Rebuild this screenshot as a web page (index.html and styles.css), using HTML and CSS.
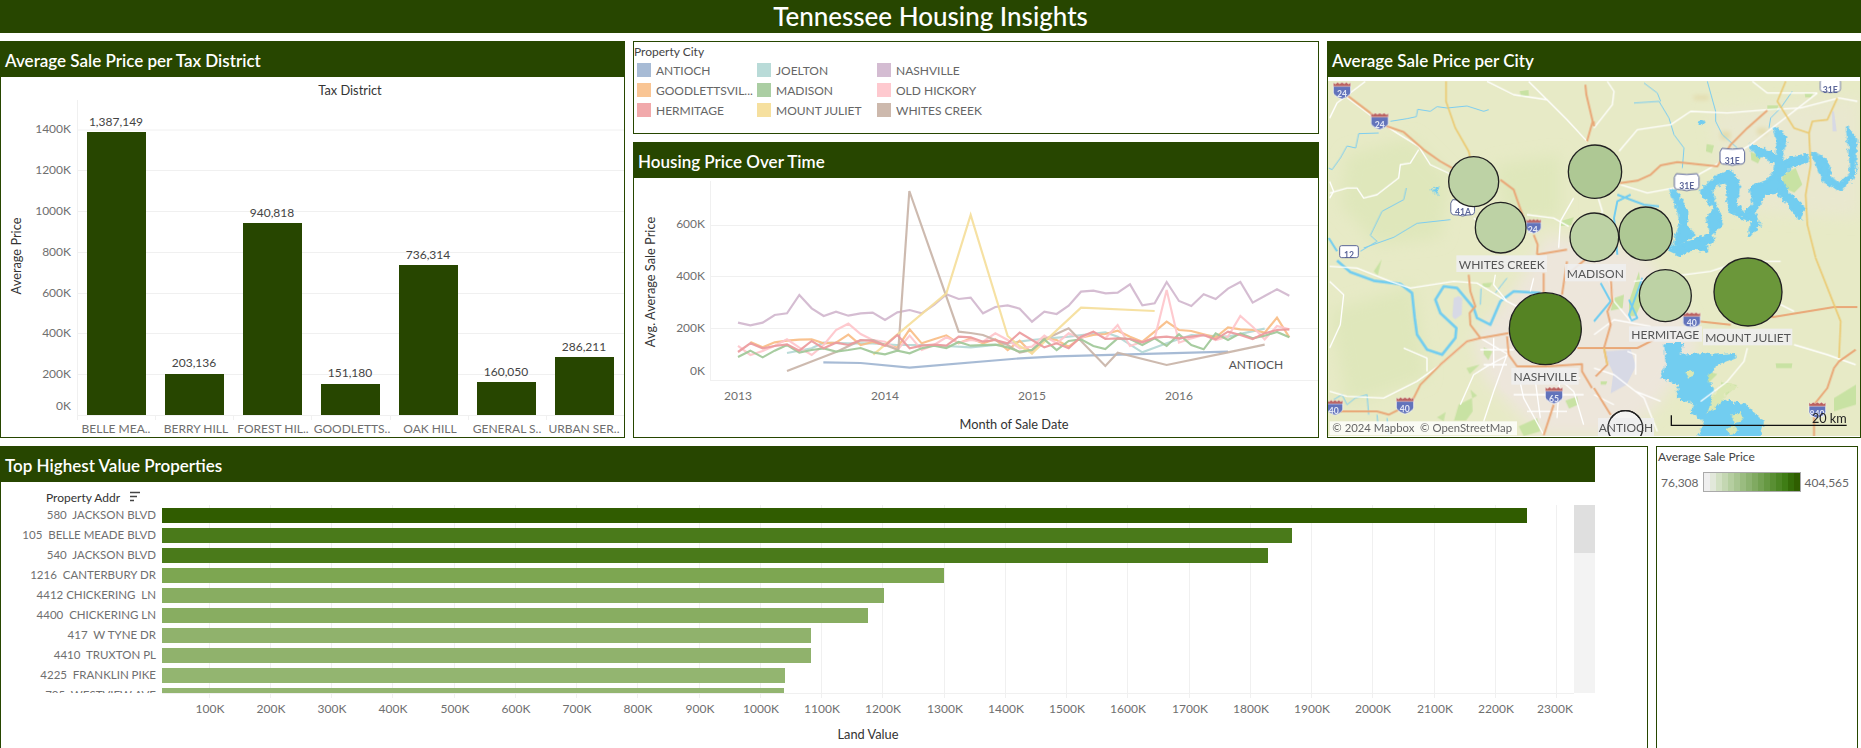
FILE: index.html
```html
<!DOCTYPE html>
<html lang="en">
<head>
<meta charset="utf-8">
<title>Tennessee Housing Insights</title>
<link rel="stylesheet" href="styles.css">
</head>
<body>
<header class="title-bar">Tennessee Housing Insights</header>
<main class="dash">
  <div class="top-row">
    <section class="panel">
      <h2 class="panel-head">Average Sale Price per Tax District</h2>
      <svg class="chart" width="623" height="360" viewBox="1 77 623 360">
        <text class="axis-title" x="350" y="90">Tax District</text>
        <g class="grid">
          <line x1="77" x2="624" y1="130" y2="130"/><line x1="77" x2="624" y1="170.5" y2="170.5"/><line x1="77" x2="624" y1="211.5" y2="211.5"/><line x1="77" x2="624" y1="252.5" y2="252.5"/><line x1="77" x2="624" y1="293.5" y2="293.5"/><line x1="77" x2="624" y1="333.5" y2="333.5"/><line x1="77" x2="624" y1="374.5" y2="374.5"/><line x1="77" x2="624" y1="415.5" y2="415.5"/>
          <line x1="77.5" x2="77.5" y1="100" y2="420"/><line x1="155.5" x2="155.5" y1="415" y2="420"/><line x1="233.5" x2="233.5" y1="415" y2="420"/><line x1="311.5" x2="311.5" y1="415" y2="420"/><line x1="390.5" x2="390.5" y1="415" y2="420"/><line x1="468.5" x2="468.5" y1="415" y2="420"/><line x1="546.5" x2="546.5" y1="415" y2="420"/>
        </g>
        <g class="bar-dark">
          <rect x="87" y="132" width="59" height="283"/><rect x="165" y="374" width="59" height="41"/><rect x="243" y="223" width="59" height="192"/><rect x="321" y="384" width="59" height="31"/><rect x="399" y="265" width="59" height="150"/><rect x="477" y="382" width="59" height="33"/><rect x="555" y="357" width="59" height="58"/>
        </g>
        <g class="tick tick-end">
          <text x="71" y="129">1400K</text><text x="71" y="170">1200K</text><text x="71" y="211">1000K</text><text x="71" y="252">800K</text><text x="71" y="293">600K</text><text x="71" y="333">400K</text><text x="71" y="374">200K</text><text x="71" y="406">0K</text>
        </g>
        <g class="value">
          <text x="116" y="122">1,387,149</text><text x="194" y="363">203,136</text><text x="272" y="213">940,818</text><text x="350" y="373">151,180</text><text x="428" y="255">736,314</text><text x="506" y="372">160,050</text><text x="584" y="347">286,211</text>
        </g>
        <g class="tick tick-mid">
          <text x="116" y="429">BELLE MEA..</text><text x="196" y="429">BERRY HILL</text><text x="273" y="429">FOREST HIL..</text><text x="352" y="429">GOODLETTS..</text><text x="430" y="429">OAK HILL</text><text x="507" y="429">GENERAL S..</text><text x="584" y="429">URBAN SER..</text>
        </g>
        <text class="axis-title" transform="translate(16 256) rotate(-90)">Average Price</text>
      </svg>
    </section>

    <div class="mid-col">
      <section class="panel legend-panel">
        <div class="legend-title">Property City</div>
        <ul class="city-legend">
          <li><i class="sw c-antioch"></i>ANTIOCH</li>
          <li><i class="sw c-joelton"></i>JOELTON</li>
          <li><i class="sw c-nashville"></i>NASHVILLE</li>
          <li><i class="sw c-goodlett"></i>GOODLETTSVIL...</li>
          <li><i class="sw c-madison"></i>MADISON</li>
          <li><i class="sw c-oldhickory"></i>OLD HICKORY</li>
          <li><i class="sw c-hermitage"></i>HERMITAGE</li>
          <li><i class="sw c-juliet"></i>MOUNT JULIET</li>
          <li><i class="sw c-whites"></i>WHITES CREEK</li>
        </ul>
      </section>
      <section class="panel line-panel">
        <h2 class="panel-head">Housing Price Over Time</h2>
        <svg class="chart" width="684" height="259" viewBox="634 178 684 259">
          <g class="grid">
            <line x1="710" x2="1318" y1="225.5" y2="225.5"/><line x1="710" x2="1318" y1="276.5" y2="276.5"/><line x1="710" x2="1318" y1="328.5" y2="328.5"/><line x1="710" x2="1318" y1="380.5" y2="380.5"/><line x1="710.5" x2="710.5" y1="181" y2="381"/>
          </g>
          <g class="tick tick-end">
            <text x="705" y="224">600K</text><text x="705" y="276">400K</text><text x="705" y="328">200K</text><text x="705" y="371">0K</text>
          </g>
          <g class="tick tick-mid">
            <text x="738" y="396">2013</text><text x="885" y="396">2014</text><text x="1032" y="396">2015</text><text x="1179" y="396">2016</text>
          </g>
          <g class="series" transform="translate(730 180) scale(.33333)">
            <polyline class="l-antioch" points="280,547 392,549 539,563 870,535 980,529 1494,515"/>
            <polyline class="l-joelton" points="171,519 245,505 281,488 355,490 428,490 500,495 575,495 649,498 722,502 796,495 869,485 905,480 1016,470 1126,457 1163,470 1237,517 1310,490 1384,465 1494,470 1604,446"/>
            <polyline class="l-goodlett" points="61,486 98,502 134,487 171,482 208,479 245,478 281,490 318,488 355,464 392,495 428,486 465,495 502,503 539,448 575,490 612,478 649,466 686,490 722,475 759,490 796,478 833,510 869,482 906,520 943,475 980,480 1016,500 1053,473 1090,465 1126,462 1163,452 1200,470 1237,485 1274,455 1310,425 1347,450 1384,453 1421,463 1457,472 1494,442 1531,448 1568,450 1604,458 1641,413 1678,472"/>
            <polyline class="l-oldhickory" points="24,498 61,525 98,513 134,497 171,478 208,503 245,525 281,495 318,450 355,431 392,462 428,480 465,485 502,510 539,467 575,510 612,495 649,472 686,488 722,480 759,485 796,460 833,480 869,505 906,500 943,467 980,490 1016,460 1053,475 1090,455 1126,475 1163,435 1200,498 1237,485 1274,475 1310,330 1347,488 1384,475 1421,465 1457,480 1494,470 1531,408 1568,440 1604,478 1641,438 1678,448"/>
            <polyline class="l-nashville" points="24,428 61,436 98,428 134,405 171,400 208,345 245,385 281,408 318,395 355,407 392,400 428,398 465,420 502,397 539,390 575,400 612,375 649,343 686,357 722,353 759,400 796,381 833,376 869,386 906,425 943,395 980,402 1016,377 1053,335 1090,332 1127,340 1163,338 1200,313 1237,376 1274,370 1310,306 1347,363 1384,378 1421,343 1457,357 1494,326 1531,306 1568,368 1604,348 1641,328 1678,347"/>
            <polyline class="l-whites" points="171,573 320,515 390,482 430,480 465,495 505,510 538,33 686,455 722,459 759,465 833,495 869,518 906,510 940,480 1016,445 1126,558 1163,518 1310,555 1494,517 1604,494"/>
            <polyline class="l-juliet" points="430,524 649,340 722,105 833,468 869,498 906,520 1053,383 1274,393"/>
            <polyline class="l-madison" points="24,531 61,512 98,532 134,512 171,495 208,518 245,510 281,505 318,515 355,510 392,504 428,517 465,523 502,512 539,520 575,505 612,497 649,504 686,486 722,497 796,494 833,502 869,515 906,510 943,478 980,510 1016,483 1053,478 1090,498 1126,507 1163,475 1200,477 1237,495 1274,475 1310,498 1347,463 1384,495 1421,508 1457,460 1494,480 1531,460 1568,475 1604,467 1641,456 1678,472"/>
            <polyline class="l-hermitage" points="24,516 61,490 98,505 134,498 171,493 208,512 245,483 281,505 318,488 355,495 392,480 428,483 465,497 502,465 539,505 575,497 612,494 649,497 686,470 722,472 759,485 796,480 833,490 869,458 906,480 943,502 980,490 1016,505 1053,470 1090,455 1126,477 1163,475 1200,477 1237,487 1274,473 1310,470 1347,475 1384,470 1421,465 1457,478 1494,455 1531,465 1568,477 1604,460 1641,450 1678,448"/>
          </g>
          <text class="tick tick-mid mark-label" x="1256" y="364">ANTIOCH</text>
          <text class="axis-title" x="1014" y="424">Month of Sale Date</text>
          <text class="axis-title" transform="translate(650 282) rotate(-90)">Avg. Average Sale Price</text>
        </svg>
      </section>
    </div>

    <section class="panel">
      <h2 class="panel-head map-head">Average Sale Price per City</h2>
      <svg class="map" width="532" height="355" viewBox="3 9 1596 1065">
        <defs>
          <filter id="soft" x="-10%" y="-10%" width="120%" height="120%"><feGaussianBlur stdDeviation="22"/></filter>
          <filter id="soft2" x="-20%" y="-20%" width="140%" height="140%"><feGaussianBlur stdDeviation="6"/></filter>
          <filter id="tiny" x="-2%" y="-2%" width="104%" height="104%"><feGaussianBlur stdDeviation="1.2"/></filter>
          <filter id="jag" x="-5%" y="-5%" width="110%" height="110%"><feTurbulence type="fractalNoise" baseFrequency=".08" numOctaves="3" seed="4" result="n"/><feDisplacementMap in="SourceGraphic" in2="n" scale="18" xChannelSelector="R" yChannelSelector="G"/></filter>
          <symbol id="ishield" viewBox="0 0 54 54" overflow="visible">
            <path class="sh-blue" d="M1 14H53V32C53 42 40 48 27 53C14 48 1 42 1 32Z"/>
            <path class="sh-red" d="M1 4L7 8L14 3L20 7L27 3L34 7L40 3L47 8L53 4V15H1Z"/>
          </symbol>
          <symbol id="ushield" viewBox="0 0 78 56" overflow="visible">
            <path class="sh-us" d="M8 3Q39 8 70 3L76 14V40Q76 48 68 50Q52 50 39 54Q26 50 10 50Q2 48 2 40V14Z"/>
          </symbol>
        </defs>
        <rect class="land" x="0" y="0" width="1602" height="1080"/>
        <g class="soft">
          <path class="forest" d="M60 230L250 180L370 300L340 480L150 500L40 380Z"/>
          <path class="forest" d="M500 260L700 230L700 420L540 430Z"/>
          <path class="forest" d="M10 700L260 620L300 900L60 980Z"/>
          <path class="warm" d="M1150 100L1600 60L1600 420L1200 400Z"/>
          <path class="urban" d="M660 470L940 520L1040 640L1120 800L980 1000L860 1074L640 1074L470 900L440 780L560 640Z"/>
        </g>
        <g class="soft2">
          <path class="urban" d="M640 620L760 600L800 700L640 720Z"/>
          <path class="urban" d="M500 780L640 800L760 950L640 1020L520 930Z"/>
          <path class="tan" d="M1100 52h45v14h-45z"/><path class="tan" d="M1180 160h30v25h-30z"/><path class="tan" d="M1290 150h30v20h-30z"/>
        </g>
        <g class="blur">
        <g class="park">
          <path d="M578 40l26-4l2 18l-24 2z"/><path d="M705 428l35-10l-8 24l-32 2z"/>
          <g transform="translate(801 0)"><path d="M338 198l22 4l-6 24l-18-6z"/><path d="M470 222l34 10l-12 24l-20-10z"/><path d="M565 290l40-20l20 50l-24 24l-36-16z"/><path d="M520 82l34 0l-6 14l-28 0z"/><path d="M632 46l26 0l-8 12l-16 0z"/></g>
          <g transform="translate(0 540)"><path d="M140 40l24-36l-12 48z"/><path d="M466 76l30-2l-8 14l-22 0z"/><path d="M470 268l26 12l-12 26l-14-18z"/><path d="M418 330l40-10l-30 28z"/><path d="M430 395l20 18l-14 8z"/><path d="M395 440l40-20l2 40l-20 28l-36 0z"/><path d="M330 478l26-16l-6 28z"/><path d="M575 505l55-25l10 40l-50 14z"/><path d="M715 428l35-12l4 24l-28 12z"/></g>
          <g transform="translate(801 540)"><path d="M60 120l30-10l-4 40l-36 8z"/><path d="M105 130l30-90l10 90l-20 44l-20 0z"/><path d="M545 316h50l-2 14l-46 0z"/><path d="M720 420l66-40v60l-66 20z"/><path d="M20 370h20l-4 10l-16 0z"/><path d="M380 372l50 10l-34 30z"/><path d="M340 340l30 8l-30 30z"/></g>
        </g>
        <g class="airport">
          <path d="M380 660l14-6l12 6l-2 50l-20 14l-8-8z"/>
          <path transform="translate(801 540)" d="M36 280l74-6l16 50l-28 56l-48 26l8-60l-18-40z"/>
          <path transform="translate(801 0)" d="M714 100l6 0l8 60l-12 0z"/>
        </g>
        <g class="creek">
          <path d="M190 130L240 122L268 116L272 94L310 100L330 86L360 90L420 84L470 100L485 95"/>
          <path d="M155 165L95 167L86 210L60 204L40 240L15 275L5 270"/>
          <path d="M100 520L150 490L130 472L165 400L230 365L238 330"/>
          <path d="M110 510L200 478L270 436L370 425"/>
          <g transform="translate(801 0)">
            <path d="M120 75L195 70L225 120L240 170L270 210L265 270"/><path d="M150 15L190 45L200 70"/><path d="M340 10L365 100L365 130L385 170L430 210"/><path d="M595 40L560 90L530 120L525 150"/>
          </g>
          <g transform="translate(0 540)">
            <path d="M20 425L45 410L60 440L85 420L120 410L125 470"/><path d="M150 470L155 520M180 480L185 530"/><path d="M462 92L460 140M540 60L505 105"/>
          </g>
        </g>
        <g class="river">
          <path d="M5 480L30 520"/>
          <path transform="translate(0 540)" class="river-wide" d="M30 8L70 42L140 68L220 78L255 105L263 180L270 230L300 275L345 290L385 240L388 210L340 165L325 125L350 85L390 90L440 150L450 180L490 200L520 130L560 100L640 105"/>
          <path transform="translate(801 540)" d="M20 75L50 130L0 190M105 125L130 180L112 188L105 170L125 115L145 60"/>
          <path transform="translate(801 0)" d="M110 350L70 370L60 420L70 530M70 350L150 380L195 385"/>
        </g>
        </g>
        <g class="jag">
        <g class="lake">
          <path d="M310 335l30-10l-10 14l6 14l-14-8z"/>
          <path transform="translate(801 0)" d="M312 130l16-4l4 10l-16 4z"/>
          <path class="lake-wide" transform="translate(801 0)" d="M228 515L290 492L350 470L340 420L365 392L320 342L370 295L410 280L435 320L425 375L450 410L480 380L468 330L520 310L545 280L552 240L530 225L495 235L470 205L510 215L530 250L548 262L552 200L540 150L575 175L558 255L590 240L640 232L640 248L590 265L555 300L585 350L628 385L618 424L590 385L550 340L510 350L480 400L495 440L465 472L475 430L450 420L410 400L400 350L400 310L375 315L350 340L370 400L382 440L350 470L358 490L330 500L340 520L300 510L260 530Z"/>
          <path class="lake-wide" transform="translate(801 0)" d="M232 338L245 340L275 400L275 445L300 470L258 495L240 500L262 440L255 400Z"/>
          <path class="lake-wide" transform="translate(801 0)" d="M655 222L700 250L710 300L735 320L770 290L770 240L760 150L785 185L780 290L740 335L690 310L670 260Z"/>
          <path transform="translate(801 540)" d="M210 255L270 255L260 290L330 285L355 290L420 285L425 300L370 320L340 360L360 395L350 420L390 425L460 440L510 490L500 540L310 540L330 490L290 465L300 440L250 420L250 380L200 360L215 320Z"/>
        </g>
        <g class="lake-land">
          <path transform="translate(801 540)" d="M385 372L430 385L395 410L375 440L340 465L355 420Z"/>
          <path transform="translate(801 540)" d="M410 470l30-6l6 24l-26 8z"/>
          <path transform="translate(801 540)" d="M275 345l22-8l6 16l-20 6z"/>
          <path transform="translate(801 540)" d="M400 510l26-4l2 18l-24 4z"/>
        </g>
        </g>
        <g class="blur">
        <g class="road-w">
          <path d="M8 120L30 75L115 10"/>
          <path d="M60 58L135 115L210 165L275 205L310 260L375 290"/>
          <path d="M480 10L560 50L660 65L720 125L780 190"/>
          <path d="M605 10L660 65"/>
          <path d="M8 345L60 330L90 330L110 360L150 350L215 300L220 260L250 255L275 215"/>
          <path d="M8 310L20 340L8 360"/>
          <path d="M440 420L470 440"/>
          <path d="M600 410L680 420L725 445M740 360L700 430L695 510"/>
          <g transform="translate(801 0)">
            <path d="M75 220L130 155L230 140L290 100L400 105L520 95L620 90L735 60L790 70"/>
            <path d="M80 320L160 345L240 330L340 275L470 200L670 45"/>
            <path d="M475 10L520 45L630 45L670 45"/>
            <path d="M40 10L60 40L55 80L0 150"/>
            <path d="M8 345L25 400L20 430"/>
          </g>
          <g transform="translate(0 540)">
            <path d="M8 25L90 30L190 70L250 90L380 70L450 75L540 130"/>
            <path d="M8 400L60 415L170 420L270 370L340 320"/>
            <path d="M340 320L420 250L460 240M480 325L440 350L400 440"/>
            <path d="M460 240L545 290L480 325M500 240L500 330M540 290L500 400L470 490"/>
            <path d="M580 150L540 130L500 80L505 50M620 60L610 100"/>
            <path d="M570 330L590 420L650 530M660 330L740 400L770 500M710 130L700 220"/>
            <path d="M8 70L50 110L40 200L8 270"/>
            <path d="M230 270L300 300L300 340"/>
            <path d="M460 275H560M470 320H540M590 360H760M560 410H770M600 460H720M620 330L640 480M700 340L690 480"/>
          </g>
          <g transform="translate(801 540)">
            <path d="M0 230L60 185L170 205M40 40L60 130L110 190"/>
            <path d="M120 70L350 40L440 10L560 10M540 130L600 160"/>
            <path d="M0 330L60 350L150 420L190 520M0 410L60 440M125 400L200 430"/>
            <path d="M100 280L125 290L125 350M320 430L400 370L450 310L460 270"/>
            <path d="M600 260L700 290L785 320"/>
          </g>
        </g>
        <g class="road-o">
          <path d="M25 25L130 105L180 145L230 162L290 215L340 250L375 270"/>
          <path d="M520 305L560 335L572 370L590 420"/>
          <path d="M620 470L632 500L630 530"/>
          <path d="M775 20L778 50L797 130L780 190M800 130L801 145"/>
          <path d="M780 540L720 590M630 530L720 515"/>
          <g transform="translate(801 0)">
            <path d="M78 315L130 308L170 290L200 262L250 252L370 265L410 200L460 150L520 97"/>
          </g>
          <g transform="translate(0 540)">
            <path d="M40 460L150 460L185 470L215 455L260 420L280 380L340 320L420 250L460 240L545 225"/>
            <path d="M425 50L430 100L445 145L428 165L430 200L460 240"/>
            <path d="M650 45L650 110M720 10L705 110"/>
            <path d="M540 235L545 290L570 325L660 325L765 318L765 340L795 390"/>
            <path d="M680 440L650 532"/>
          </g>
          <g transform="translate(801 540)">
            <path d="M533 178L720 147L790 147"/>
            <path d="M-50 270L130 270L180 245"/>
            <path d="M50 60L55 130L40 160L50 200L30 270L40 320L5 355"/>
            <path d="M0 390L50 470"/>
            <path d="M785 275L735 310L720 330L700 390L660 440"/>
            <path d="M660 470L660 540"/>
            <path d="M300 188L410 200"/>
          </g>
        </g>
        <g class="road-y">
          <path d="M357 10L357 70L385 150L425 220L430 240"/>
          <g transform="translate(801 0)">
            <path d="M575 10L550 70L600 150L645 165L650 260L635 350L640 440L665 540"/>
            <path d="M645 165L655 130L700 125L730 60"/>
          </g>
          <g transform="translate(801 540)">
            <path d="M665 0L740 190L735 300"/>
            <path d="M30 270L40 320"/>
          </g>
        </g>
        </g>
        <use href="#ishield" x="18" y="10" width="54" height="54"/>
        <use href="#ishield" x="131" y="102" width="54" height="54"/>
        <use href="#ishield" x="597" y="417" width="46" height="54"/>
        <use href="#ishield" x="780" y="-30" width="30" height="42"/>
        <use href="#ishield" x="207" y="955" width="54" height="54"/>
        <use href="#ishield" x="0" y="962" width="48" height="52"/>
        <use href="#ishield" x="654" y="924" width="54" height="54"/>
        <use href="#ishield" x="1067" y="700" width="54" height="54"/>
        <use href="#ishield" x="1434" y="970" width="74" height="52"/>
        <use href="#ushield" x="1177" y="208" width="78" height="56"/>
        <use href="#ushield" x="1040" y="284" width="78" height="56"/>
        <use href="#ushield" x="1471" y="0" width="78" height="46"/>
        <use href="#ushield" x="368" y="362" width="78" height="54"/>
        <rect class="sh-route" x="38" y="503" width="56" height="36" rx="6"/>
        <g class="sh-i">
          <text x="45" y="47">24</text><text x="158" y="140">24</text><text x="617" y="455">24</text><text x="233" y="990">40</text><text x="20" y="997">40</text><text x="681" y="960">65</text><text x="1094" y="733">40</text><text x="1470" y="1005">840</text>
        </g>
        <g class="sh-u">
          <text x="1216" y="246">31E</text><text x="1079" y="322">31E</text><text x="1510" y="33">31E</text><text x="408" y="400">41A</text><text x="66" y="530">12</text>
        </g>
        <g class="marks">
          <circle class="m-light" cx="440" cy="311" r="75"/>
          <circle class="m-light" cx="521" cy="449" r="76"/>
          <circle class="m-mid" cx="804" cy="281" r="80"/>
          <circle class="m-light" cx="802" cy="478" r="73"/>
          <circle class="m-mid" cx="956" cy="467" r="80"/>
          <circle class="m-light" cx="1015" cy="653" r="78"/>
          <circle class="m-high" cx="1263" cy="642" r="102"/>
          <circle class="m-top" cx="655" cy="752" r="108"/>
          <circle class="m-pale" cx="895" cy="1050" r="52"/>
        </g>
        <g class="map-labels">
          <rect x="388" y="532" width="272" height="50"/><rect x="714" y="558" width="183" height="52"/><rect x="906" y="745" width="219" height="46"/><rect x="1128" y="752" width="268" height="50"/><rect x="553" y="870" width="202" height="50"/><rect x="813" y="1020" width="168" height="55"/>
        </g>
        <circle class="m-ring" cx="895" cy="1050" r="52"/>
        <g class="map-text">
          <text x="524" y="558">WHITES CREEK</text><text x="805" y="585">MADISON</text><text x="1015" y="768">HERMITAGE</text><text x="1263" y="778">MOUNT JULIET</text><text x="655" y="895">NASHVILLE</text><text x="897" y="1047">ANTIOCH</text>
        </g>
        <rect class="credit-bg" x="8" y="1030" width="562" height="42"/>
        <text class="credit" x="16" y="1062">© 2024 Mapbox  © OpenStreetMap</text>
        <path class="scale-bar" d="M1033 1012V1042H1559"/>
        <text class="scale-text" x="1559" y="1020">20 km</text>
      </svg>
    </section>
  </div>

  <div class="bottom-row">
    <section class="panel wide-panel">
      <h2 class="panel-head wide-head">Top Highest Value Properties</h2>
      <svg class="chart" width="1646" height="265" viewBox="1 482 1646 265">
        <defs><clipPath id="rows"><rect x="1" y="482" width="1600" height="211"/></clipPath></defs>
        <text class="axis-title field" x="46" y="497">Property Addr</text>
        <path class="sort" d="M130 492.5H140M130 496.5H137M130 500.5H134"/>
        <g class="grid">
          <line x1="209.5" x2="209.5" y1="505" y2="698"/><line x1="270.5" x2="270.5" y1="505" y2="698"/><line x1="331.5" x2="331.5" y1="505" y2="698"/><line x1="392.5" x2="392.5" y1="505" y2="698"/><line x1="454.5" x2="454.5" y1="505" y2="698"/><line x1="515.5" x2="515.5" y1="505" y2="698"/><line x1="576.5" x2="576.5" y1="505" y2="698"/><line x1="637.5" x2="637.5" y1="505" y2="698"/><line x1="699.5" x2="699.5" y1="505" y2="698"/><line x1="760.5" x2="760.5" y1="505" y2="698"/><line x1="821.5" x2="821.5" y1="505" y2="698"/><line x1="882.5" x2="882.5" y1="505" y2="698"/><line x1="944.5" x2="944.5" y1="505" y2="698"/><line x1="1005.5" x2="1005.5" y1="505" y2="698"/><line x1="1066.5" x2="1066.5" y1="505" y2="698"/><line x1="1127.5" x2="1127.5" y1="505" y2="698"/><line x1="1189.5" x2="1189.5" y1="505" y2="698"/><line x1="1250.5" x2="1250.5" y1="505" y2="698"/><line x1="1311.5" x2="1311.5" y1="505" y2="698"/><line x1="1372.5" x2="1372.5" y1="505" y2="698"/><line x1="1434.5" x2="1434.5" y1="505" y2="698"/><line x1="1495.5" x2="1495.5" y1="505" y2="698"/><line x1="1556.5" x2="1556.5" y1="505" y2="698"/>
          <line x1="162" x2="1574" y1="693.5" y2="693.5"/>
        </g>
        <g clip-path="url(#rows)">
          <rect class="b1" x="162" y="508" width="1365" height="15"/>
          <rect class="b2" x="162" y="528" width="1130" height="15"/>
          <rect class="b2" x="162" y="548" width="1106" height="15"/>
          <rect class="b3" x="162" y="568" width="782" height="15"/>
          <rect class="b4" x="162" y="588" width="722" height="15"/>
          <rect class="b4" x="162" y="608" width="706" height="15"/>
          <rect class="b5" x="162" y="628" width="649" height="15"/>
          <rect class="b5" x="162" y="648" width="649" height="15"/>
          <rect class="b6" x="162" y="668" width="623" height="15"/>
          <rect class="b6" x="162" y="688" width="622" height="15"/>
          <g class="tick tick-end addr">
            <text x="156" y="515">580  JACKSON BLVD</text>
            <text x="156" y="535">105  BELLE MEADE BLVD</text>
            <text x="156" y="555">540  JACKSON BLVD</text>
            <text x="156" y="575">1216  CANTERBURY DR</text>
            <text x="156" y="595">4412 CHICKERING  LN</text>
            <text x="156" y="615">4400  CHICKERING LN</text>
            <text x="156" y="635">417  W TYNE DR</text>
            <text x="156" y="655">4410  TRUXTON PL</text>
            <text x="156" y="675">4225  FRANKLIN PIKE</text>
            <text x="156" y="695">705  WESTVIEW AVE</text>
          </g>
        </g>
        <g class="tick tick-mid">
          <text x="210" y="709">100K</text><text x="271" y="709">200K</text><text x="332" y="709">300K</text><text x="393" y="709">400K</text><text x="455" y="709">500K</text><text x="516" y="709">600K</text><text x="577" y="709">700K</text><text x="638" y="709">800K</text><text x="700" y="709">900K</text><text x="761" y="709">1000K</text><text x="822" y="709">1100K</text><text x="883" y="709">1200K</text><text x="945" y="709">1300K</text><text x="1006" y="709">1400K</text><text x="1067" y="709">1500K</text><text x="1128" y="709">1600K</text><text x="1190" y="709">1700K</text><text x="1251" y="709">1800K</text><text x="1312" y="709">1900K</text><text x="1373" y="709">2000K</text><text x="1435" y="709">2100K</text><text x="1496" y="709">2200K</text><text x="1555" y="709">2300K</text>
        </g>
        <rect class="scroll-track" x="1574" y="505" width="21" height="188"/>
        <rect class="scroll-thumb" x="1574" y="505" width="21" height="48"/>
        <text class="axis-title" x="868" y="734">Land Value</text>
      </svg>
    </section>
    <section class="panel scale-panel">
      <div class="legend-title">Average Sale Price</div>
      <div class="color-scale">
        <span>76,308</span>
        <i class="ramp"></i>
        <span>404,565</span>
      </div>
    </section>
  </div>
</main>
</body>
</html>
```
FILE: styles.css
```css
* { box-sizing: border-box; }
html, body { margin: 0; padding: 0; }
body {
  width: 1861px;
  height: 748px;
  overflow: hidden;
  background: #fff;
  font-family: Lato, "Liberation Sans", sans-serif;
  color: #555;
}
.title-bar {
  height: 33px;
  background: #274600;
  color: #fff;
  font-size: 26px;
  font-weight: 500;
  line-height: 33px;
  text-align: center;
}
.dash { padding-top: 8px; }
.top-row {
  display: grid;
  grid-template-columns: 625px 686px 534px;
  column-gap: 8px;
  height: 397px;
}
.mid-col {
  display: flex;
  flex-direction: column;
  gap: 8px;
}
.panel {
  border: 1px solid #274600;
  background: #fff;
  overflow: hidden;
}
.panel-head {
  margin: 0;
  height: 35px;
  background: #274600;
  color: #fff;
  font-size: 17px;
  font-weight: 600;
  line-height: 37px;
  padding-left: 4px;
}
.map-head { margin-bottom: 4px; }
.chart, .map { display: block; }
.legend-panel { height: 93px; padding: 3px 0 0 0; }
.line-panel { flex: 1; }
.legend-title { font-size: 12px; line-height: 14px; color: #444; }
.city-legend {
  list-style: none;
  margin: 1px 0 0;
  padding: 0 0 0 3px;
  display: grid;
  grid-template-columns: 120px 120px 200px;
  grid-auto-rows: 20px;
  font-size: 12px;
  color: #666;
}
.city-legend li { display: flex; align-items: center; gap: 5px; white-space: nowrap; }
.sw { display: block; flex: none; width: 14px; height: 14px; }
.c-antioch { background: #a7bbd5; }
.c-joelton { background: #b9dbd8; }
.c-nashville { background: #d4bcd2; }
.c-goodlett { background: #f9c594; }
.c-madison { background: #abcea3; }
.c-oldhickory { background: #fec9cf; }
.c-hermitage { background: #f1a9ab; }
.c-juliet { background: #f6e09f; }
.c-whites { background: #cdb9ad; }

.bottom-row {
  display: grid;
  grid-template-columns: 1648px 202px;
  column-gap: 8px;
  margin-top: 8px;
  height: 310px;
}
.wide-head { width: 1594px; }
.scale-panel { padding-top: 3px; }
.scale-panel .legend-title { padding-left: 1px; }
.color-scale {
  display: flex;
  align-items: center;
  gap: 4px;
  margin: 8px 0 0 4px;
  font-size: 12px;
  color: #666;
}
.ramp {
  display: block;
  width: 98px;
  height: 20px;
  border: 1px solid #aaa;
  background: linear-gradient(90deg,
    #efefef 0 6px, #e2e8da 6px 12px, #d2e0c3 12px 18px, #c4d7b2 18px 24px,
    #b5cea0 24px 30px, #a8c591 30px 36px, #9abc80 36px 42px, #8db371 42px 48px,
    #80aa61 48px 54px, #73a152 54px 60px, #669842 60px 66px, #598f33 66px 72px,
    #4c8624 72px 78px, #3f7d15 78px 84px, #346c08 84px 90px, #2f5e00 90px 96px);
}

/* svg charts */
svg text { font-family: Lato, "Liberation Sans", sans-serif; dominant-baseline: central; }
.grid line { stroke: #f0f0f0; stroke-width: 1; }
.bar-dark rect { fill: #274600; }
g.tick, g.value { transform: translateY(-1px); }
.tick text, .tick { font-size: 12px; fill: #6f6f6f; }
.tick-end text { text-anchor: end; }
.tick-mid text, .tick-mid { text-anchor: middle; }
.addr text { white-space: pre; font-size: 11.5px; }
.value text { font-size: 12px; fill: #444; text-anchor: middle; }
.axis-title { font-size: 12.8px; fill: #333; text-anchor: middle; }
.axis-title.field { text-anchor: start; font-size: 12px; }
.mark-label { fill: #555; }
.sort { stroke: #444; stroke-width: 1.5; fill: none; }

.series polyline { fill: none; stroke-width: 6.5; stroke-linejoin: miter; opacity: .92; }
.l-antioch { stroke: #9fb5d1; }
.l-joelton { stroke: #b4d8d5; }
.l-goodlett { stroke: #f8bd85; }
.l-oldhickory { stroke: #fec5cb; }
.l-nashville { stroke: #d1b7ce; }
.l-whites { stroke: #c9b4a8; }
.l-juliet { stroke: #f5de9b; }
.l-madison { stroke: #a0c898; }
.l-hermitage { stroke: #ec9a9d; }

.b1 { fill: #305c00; }
.b2 { fill: #4a7a1a; }
.b3 { fill: #7da651; }
.b4 { fill: #88ad61; }
.b5 { fill: #90b26c; }
.b6 { fill: #93b570; }
.scroll-track { fill: #f3f3f3; }
.scroll-thumb { fill: #dfdfdf; }

/* map */
.land { fill: #e7eac6; }
.soft { filter: url(#soft); }
.soft2 { filter: url(#soft2); }
.blur { filter: url(#tiny); }
.jag { filter: url(#jag); }
.forest { fill: #dfe7bb; }
.warm { fill: #e9e8cf; }
.urban { fill: #ede6db; }
.tan { fill: #e3dcae; }
.park path { fill: #c8e2a3; }
.airport path { fill: #d7d9e5; }
.creek path { fill: none; stroke: #7ccdf0; stroke-width: 3; }
.river path { fill: none; stroke: #72cdf0; stroke-width: 6; stroke-linejoin: round; }
.river .river-wide { stroke-width: 8; }
.lake path { fill: #72cdf0; }
.lake .lake-wide { stroke: #72cdf0; stroke-width: 10; stroke-linejoin: round; }
.lake-land path { fill: #dbe8b4; }
.road-w path { fill: none; stroke: #fff; stroke-width: 4; stroke-linejoin: round; }
.road-o path { fill: none; stroke: #e9a878; stroke-width: 6; stroke-linejoin: round; }
.road-y path { fill: none; stroke: #ebca72; stroke-width: 5; stroke-linejoin: round; }
.sh-blue { fill: #6273bb; stroke: #fff; stroke-width: 2; }
.sh-red { fill: #b9605f; stroke: #fff; stroke-width: 1; }
.sh-us { fill: #fff; stroke: #5a6598; stroke-width: 3; }
.sh-route { fill: #fff; stroke: #5a6598; stroke-width: 3; }
.sh-i text { font-size: 26px; font-weight: 700; fill: #e4e8f6; text-anchor: middle; }
.sh-u text { font-size: 26px; font-weight: 700; fill: #5a6598; text-anchor: middle; }
.marks circle, .m-ring { stroke: #222; stroke-width: 4; }
.m-light { fill: #bdd2a5; }
.m-mid { fill: #aec894; }
.m-high { fill: #6b973a; }
.m-top { fill: #558323; }
.m-pale { fill: #f4f4f2; }
.m-ring { fill: none; }
.map-labels rect { fill: #eeeeee; fill-opacity: .9; }
.map-text text { font-size: 36px; fill: #555; text-anchor: middle; }
.credit-bg { fill: #fff; fill-opacity: .8; }
.credit { font-size: 34px; fill: #666; white-space: pre; dominant-baseline: auto; }
.scale-bar { fill: none; stroke: #111; stroke-width: 4; }
.scale-text { font-size: 38px; fill: #222; text-anchor: end; }
```
